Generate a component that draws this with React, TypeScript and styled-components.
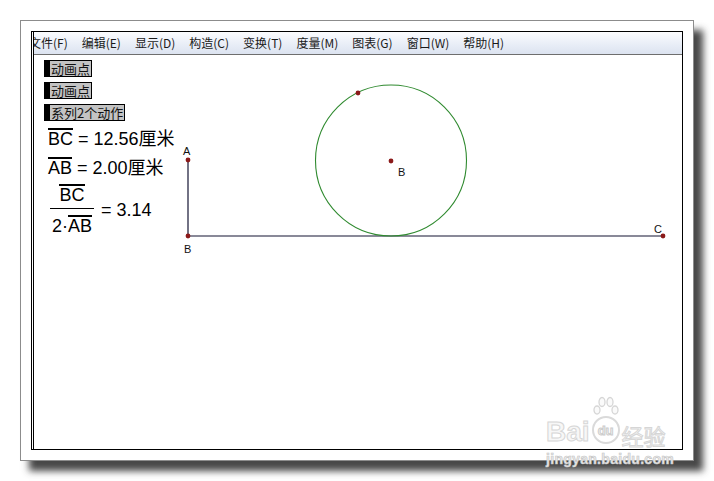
import { createGlobalStyle } from "styled-components";
import styled from "styled-components";

const GlobalStyle = createGlobalStyle`
  html, body {
    margin: 0;
    padding: 0;
    background: #fff;
  }
  body {
    font-family: "Liberation Sans", Arial, "Noto Sans CJK SC", sans-serif;
  }
`;

const MenuItems = [
  "文件(F)",
  "编辑(E)",
  "显示(D)",
  "构造(C)",
  "变换(T)",
  "度量(M)",
  "图表(G)",
  "窗口(W)",
  "帮助(H)",
];

const Buttons = ["动画点", "动画点", "系列2个动作"];

const App = () => {
  return (
    <PageWrapper>
      <GlobalStyle />
      <Paper>
        <Window>
          <MenuBar>
            {MenuItems.map((label, index) => (
              <MenuItem key={index}>{label}</MenuItem>
            ))}
          </MenuBar>
          <Canvas>
            <Geometry width="650" height="393" viewBox="34 56 650 393">
              <line x1="188" y1="161" x2="188" y2="237" stroke="#141433" strokeWidth="1.2" />
              <line x1="188" y1="237" x2="663" y2="237" stroke="#141433" strokeWidth="1.2" />
              <circle cx="391" cy="161.5" r="75.5" fill="none" stroke="#2f8a2f" strokeWidth="1.1" />
              <circle cx="188" cy="161" r="2.4" fill="#8b1a1a" />
              <circle cx="188" cy="237" r="2.4" fill="#8b1a1a" />
              <circle cx="663" cy="237" r="2.4" fill="#8b1a1a" />
              <circle cx="391" cy="162" r="2.4" fill="#8b1a1a" />
              <circle cx="358" cy="94" r="2.4" fill="#8b1a1a" />
              <text x="183" y="156" className="lbl">A</text>
              <text x="184" y="254" className="lbl">B</text>
              <text x="398" y="177" className="lbl">B</text>
              <text x="654" y="234" className="lbl">C</text>
            </Geometry>
            <Controls>
              {Buttons.map((label, index) => (
                <ActionButton key={index}>
                  <span className="grip" />
                  <span className="face">{label}</span>
                </ActionButton>
              ))}
              <Measure>
                <Over>BC</Over> = 12.56厘米
              </Measure>
              <Measure>
                <Over>AB</Over> = 2.00厘米
              </Measure>
              <FractionRow>
                <Fraction>
                  <span className="num">
                    <Over>BC</Over>
                  </span>
                  <span className="den">
                    2·<Over>AB</Over>
                  </span>
                </Fraction>
                <span>= 3.14</span>
              </FractionRow>
            </Controls>
          </Canvas>
        </Window>
      </Paper>
      <Watermark>
        <div className="logo">
          <span className="bai">Bai</span>
          <span className="du">
            <svg className="paw" width="30" height="22" viewBox="0 0 30 22">
              <ellipse cx="6" cy="14" rx="3" ry="4" />
              <ellipse cx="11" cy="6" rx="3" ry="4.5" />
              <ellipse cx="19" cy="6" rx="3" ry="4.5" />
              <ellipse cx="24" cy="14" rx="3" ry="4" />
            </svg>
            du
          </span>
          <span className="jy">经验</span>
        </div>
        <div className="url">jingyan.baidu.com</div>
      </Watermark>
    </PageWrapper>
  );
};

export default App;

const PageWrapper = styled.div`
  position: relative;
  width: 714px;
  height: 481px;
  padding: 20px 0 0 20px;
  box-sizing: border-box;
  overflow: hidden;
`;

const Paper = styled.div`
  width: 674px;
  height: 441px;
  box-sizing: border-box;
  padding: 10px;
  background: #fff;
  border: 1px solid #8c8c8c;
  box-shadow: 9px 10px 7px rgba(40, 40, 40, 0.85);
`;

const Window = styled.div`
  width: 652px;
  height: 419px;
  box-sizing: border-box;
  border: 1px solid #000;
  border-left: 3px double #000;
  display: flex;
  flex-direction: column;
  overflow: hidden;
`;

const MenuBar = styled.div`
  height: 23px;
  flex: none;
  box-sizing: border-box;
  display: flex;
  align-items: center;
  gap: 14px;
  margin-left: -5px;
  background: linear-gradient(#fbfcfe, #e9eef7 55%, #dce3f0);
  border-bottom: 1px solid #6e6e6e;
  font-family: "Noto Sans CJK SC", "Liberation Sans", sans-serif;
  font-size: 12px;
  color: #1a1a1a;
`;

const MenuItem = styled.span`
  white-space: nowrap;
  line-height: 1;
`;

const Canvas = styled.div`
  position: relative;
  flex: 1;
  background: #fff;
`;

const Geometry = styled.svg`
  position: absolute;
  left: 0;
  top: 0;
  .lbl {
    font-family: "Liberation Sans", Arial, sans-serif;
    font-size: 11px;
    fill: #111;
  }
`;

const Controls = styled.div`
  position: relative;
  display: flex;
  flex-direction: column;
  align-items: flex-start;
  padding: 5px 0 0 10px;
  gap: 5px;
`;

const ActionButton = styled.div`
  display: flex;
  height: 17px;
  box-sizing: border-box;
  border: 1px solid #000;
  background: #000;
  font-family: "Noto Sans CJK SC", sans-serif;
  font-size: 13px;
  color: #111;

  .grip {
    width: 5px;
  }
  .face {
    background: #c3c3c3;
    padding: 0 1px;
    line-height: 15px;
  }
`;

const Measure = styled.div`
  margin-left: 4px;
  margin-top: 2px;
  font-family: "Liberation Sans", Arial, "Noto Sans CJK SC", sans-serif;
  font-size: 18px;
  color: #000;
  line-height: 22px;
  white-space: nowrap;
`;

const Over = styled.span`
  display: inline-block;
  border-top: 2px solid #000;
  line-height: 18px;
`;

const FractionRow = styled.div`
  display: flex;
  align-items: center;
  gap: 7px;
  margin-left: 6px;
  margin-top: 0;
  font-family: "Liberation Sans", Arial, sans-serif;
  font-size: 18px;
  color: #000;
`;

const Fraction = styled.div`
  display: flex;
  flex-direction: column;
  align-items: center;
  width: 44px;

  .num {
    padding-bottom: 2px;
    border-bottom: 1px solid #000;
    width: 100%;
    text-align: center;
  }
  .den {
    padding-top: 6px;
    white-space: nowrap;
  }
`;

const Watermark = styled.div`
  position: absolute;
  left: 546px;
  top: 400px;
  width: 134px;
  pointer-events: none;

  .logo {
    display: flex;
    align-items: flex-end;
    height: 46px;
    font-family: "Liberation Sans", Arial, sans-serif;
  }
  .bai {
    font-size: 28px;
    font-weight: bold;
    color: #f7f7f7;
    -webkit-text-stroke: 1px #d6d6d6;
    line-height: 1;
  }
  .du {
    position: relative;
    display: inline-flex;
    align-items: center;
    justify-content: center;
    width: 24px;
    height: 24px;
    margin: 0 2px 2px 2px;
    border: 2px solid #dadada;
    border-radius: 50%;
    font-size: 13px;
    font-weight: bold;
    color: #f7f7f7;
    -webkit-text-stroke: 1px #cccccc;
  }
  .paw {
    position: absolute;
    left: -3px;
    top: -22px;
    fill: #fafafa;
    stroke: #d6d6d6;
    stroke-width: 1.3;
  }
  .jy {
    font-family: "Noto Sans CJK SC", sans-serif;
    font-size: 22px;
    color: #f7f7f7;
    -webkit-text-stroke: 1px #d6d6d6;
    line-height: 1;
  }
  .url {
    margin-top: 5px;
    font-family: "Liberation Sans", Arial, sans-serif;
    font-size: 14px;
    font-weight: bold;
    color: #ececec;
    -webkit-text-stroke: 0.6px #c4c4c4;
    letter-spacing: 0.3px;
  }
`;
